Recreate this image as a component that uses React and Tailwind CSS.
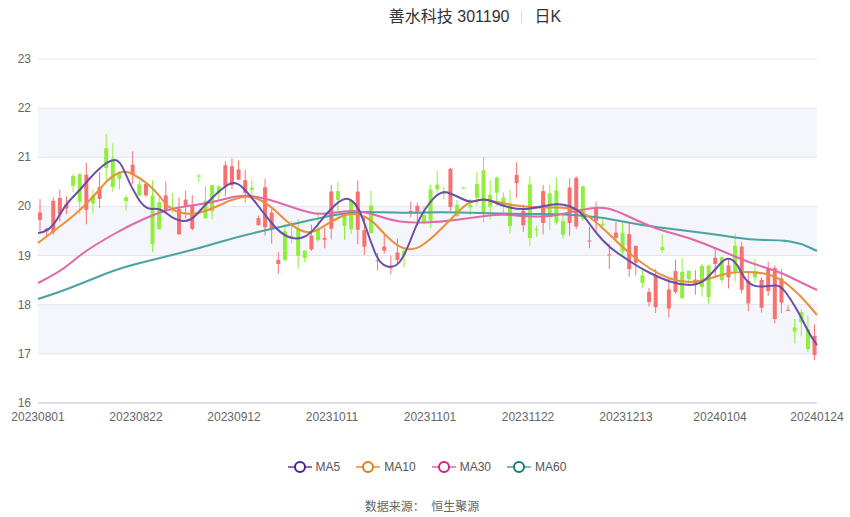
const font = { fontFamily: '"Liberation Sans", "Noto Sans CJK SC", sans-serif' };

const X0 = 38, X1 = 817, YT = 59, PX = 49.14;
const py = (p) => YT + (23 - p) * PX;

const MA5 = [[38,233],[50,232],[65,205],[80,190],[95,172],[110,160],[120,160],[130,185],[145,210],[160,208],[175,220],[190,222],[205,205],[220,190],[235,180],[250,195],[265,215],[280,233],[295,240],[310,235],[325,215],[340,200],[350,198],[360,210],[370,240],[380,265],[395,268],[405,255],[420,215],[440,190],[455,195],[470,203],[485,198],[500,205],[520,210],[540,207],[560,203],[580,210],[595,232],[610,248],[625,258],[640,268],[660,278],[680,285],[700,285],[715,270],[725,258],[735,260],[745,280],[755,287],[770,286],[780,285],[790,298],[800,315],[810,335],[817,345]];
const MA10 = [[38,243],[55,230],[75,215],[95,195],[110,177],[125,170],[140,178],[155,190],[170,210],[190,215],[210,210],[230,200],[250,195],[270,205],[290,225],[310,235],[330,222],[350,212],[370,218],[385,235],[400,248],[415,250],[430,240],[450,220],[470,200],[490,200],[510,205],[540,208],[560,207],[580,210],[600,225],[620,245],[640,262],[660,275],[680,282],[700,282],[720,275],[735,272],[760,272],[780,278],[800,295],[817,315]];
const MA30 = [[38,283],[60,272],[80,255],[100,242],[130,225],[160,212],[180,207],[210,203],[240,195],[260,197],[280,203],[300,210],[320,215],[350,210],[370,213],[390,220],[410,223],[440,222],[470,218],[500,214],[520,216],[550,217],[580,210],[600,207],[615,210],[640,222],[660,230],[690,238],[720,250],[750,263],[780,272],[800,282],[817,290]];
const MA60 = [[38,299],[60,292],[90,280],[120,268],[160,258],[200,248],[240,236],[280,227],[320,218],[350,212],[380,212],[410,213],[440,212],[480,213],[520,214],[560,214],[600,217],[640,225],[680,230],[720,235],[750,240],[780,240],[800,243],[817,251]];

const interp = (pts, x) => {
  for (let i = 1; i < pts.length; i++) {
    if (x <= pts[i][0]) {
      const [a, b] = [pts[i - 1], pts[i]];
      return a[1] + (b[1] - a[1]) * (x - a[0]) / (b[0] - a[0]);
    }
  }
  return pts[pts.length - 1][1];
};

let seed = 11;
const rnd = () => { seed = (seed * 16807) % 2147483647; return seed / 2147483647 - 0.5; };

const candles = [];
for (let i = 0; i < 118; i++) {
  const x = X0 + 2 + i * 6.62;
  const c = interp(MA5, x) + rnd() * 20;
  const o = c + rnd() * 55, cl = c + rnd() * 55;
  const hi = Math.min(o, cl) - Math.abs(rnd()) * 30;
  const lo = Math.max(o, cl) + Math.abs(rnd()) * 30;
  candles.push({ x, o, cl, hi, lo, up: cl < o });
}

// smooth curve through the points (quadratic through midpoints)
const path = (pts) => {
  let d = `M${pts[0][0]} ${pts[0][1]}`;
  for (let i = 1; i < pts.length - 1; i++) {
    const mx = (pts[i][0] + pts[i + 1][0]) / 2, my = (pts[i][1] + pts[i + 1][1]) / 2;
    d += ` Q${pts[i][0]} ${pts[i][1]} ${mx} ${my}`;
  }
  const l = pts[pts.length - 1];
  return d + ` L${l[0]} ${l[1]}`;
};

const xLabels = [[38,'20230801'],[136,'20230822'],[234,'20230912'],[332,'20231011'],[430,'20231101'],[528,'20231122'],[626,'20231213'],[720,'20240104'],[817,'20240124']];

const legend = [['MA5','#8a6cc4','#4b1f99'],['MA10','#f0a860','#e07a16'],['MA30','#e88cc0','#d11f88'],['MA60','#7bbcbb','#0f7b7b']];

export default function App() {
  return (
    <div className="w-[850px] h-[517px] bg-white relative" style={font}>
      <div className="h-[34px] flex items-center justify-center gap-3 pl-[100px] text-[16px] text-[#333]">
        <span>善水科技 301190</span>
        <span className="w-px h-[14px] bg-[#ddd]" />
        <span>日K</span>
      </div>
      <svg width="850" height="400" viewBox="0 34 850 400" className="block">
        {[22, 20, 18].map((p) => (
          <rect key={p} x={X0} y={py(p)} width={X1 - X0} height={PX} fill="#f5f6fb" />
        ))}
        {[23,22,21,20,19,18,17,16].map((p) => (
          <g key={p}>
            <line x1={X0} x2={X1} y1={py(p)} y2={py(p)} stroke="#e1e5ef" />
            <text x="31" y={py(p) + 4} textAnchor="end" fontSize="12" fill="#666">{p}</text>
          </g>
        ))}
        {xLabels.map(([x, t]) => (
          <text key={t} x={x} y="421" textAnchor="middle" fontSize="12" fill="#666">{t}</text>
        ))}
        {candles.map((c, i) => {
          const col = c.up ? '#f87171' : '#90ee3c';
          const top = Math.min(c.o, c.cl), h = Math.max(1, Math.abs(c.o - c.cl));
          return (
            <g key={i}>
              <line x1={c.x} x2={c.x} y1={c.hi} y2={c.lo} stroke={col} strokeWidth="1" />
              <rect x={c.x - 2} y={top} width="4" height={h} fill={col} />
            </g>
          );
        })}
        <path d={path(MA60)} fill="none" stroke="#4aa3a2" strokeWidth="2" />
        <path d={path(MA30)} fill="none" stroke="#e069a8" strokeWidth="2" />
        <path d={path(MA10)} fill="none" stroke="#e8913a" strokeWidth="2" />
        <path d={path(MA5)} fill="none" stroke="#6a4fa8" strokeWidth="2" />
        <line x1={X0} x2={X1} y1={py(16)} y2={py(16)} stroke="#c8ccd6" />
      </svg>
      <div className="flex justify-center gap-4 mt-[24px] text-[12px] text-[#555] pl-[4px]">
        {legend.map(([n, line, ring]) => (
          <div key={n} className="flex items-center gap-1">
            <svg width="24" height="14">
              <line x1="0" x2="24" y1="7" y2="7" stroke={line} strokeWidth="2" />
              <circle cx="12" cy="7" r="5" fill="#fff" stroke={ring} strokeWidth="2" />
            </svg>
            <span>{n}</span>
          </div>
        ))}
      </div>
      <div className="text-center text-[12px] text-[#666] mt-[22px] pr-[6px]">数据来源：&nbsp;&nbsp;恒生聚源</div>
    </div>
  );
}
